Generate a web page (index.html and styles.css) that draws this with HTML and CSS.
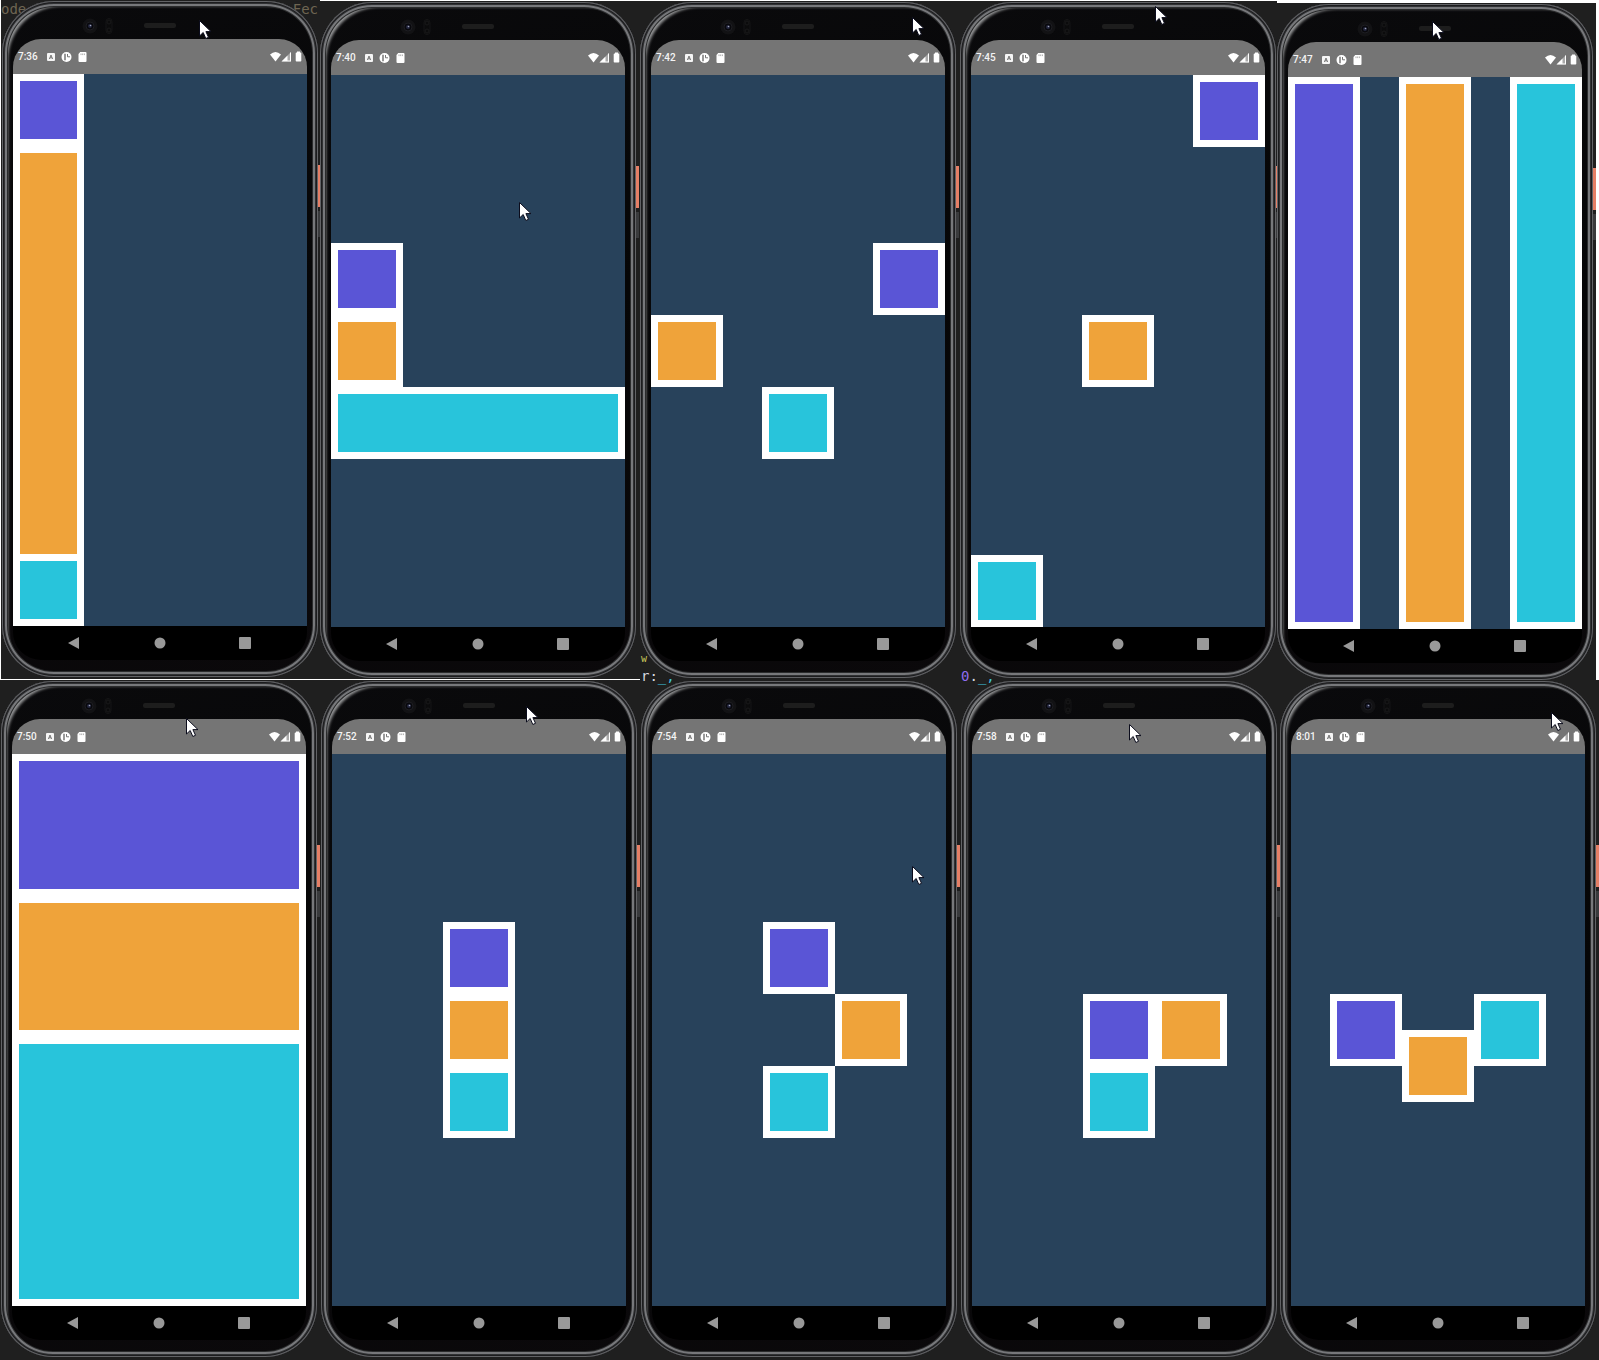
FILE: index.html
```
<!DOCTYPE html>
<html lang="en">
<head>
<meta charset="utf-8">
<title>Flexbox layouts</title>
<link rel="stylesheet" href="styles.css">
</head>
<body>
<svg class="defs" aria-hidden="true">
  <symbol id="notes" viewBox="0 0 42 12">
    <rect x="1" y="2" width="8" height="8" rx="1" fill="#f5f5f5"/>
    <path d="M3.400 8 5 4 6.600 8M4 6.800h2" fill="none" stroke="#777" stroke-width="1"/>
    <circle cx="20.500" cy="6" r="5" fill="#fff"/>
    <path d="M19 2.800v6.400" fill="none" stroke="#777" stroke-width="1.500"/>
    <path d="M21.500 3v2.800h2.500" fill="none" stroke="#777" stroke-width="1"/>
    <path d="M34.200 1h5.300q1 0 1 1v8q0 1-1 1h-6q-1 0-1-1V3z" fill="#fff"/>
    <path d="M35 2.500v1.600M36.700 2.500v1.600M38.400 2.500v1.600" stroke="#999" stroke-width=".8"/>
  </symbol>
  <symbol id="signal" viewBox="0 0 32 12">
    <path d="M0 3.500Q5.500-1.500 11 3.500L5.500 10.500z" fill="#fff"/>
    <path d="M21 1V10.500H11.500z" fill="#aaa"/>
    <path d="M17.500 4.500V10.500H11.500zM20 2l1-1V10.500H17v-1h3z" fill="#fff"/>
    <path d="M27 1.500V.5h3v1h.5q.8 0 .8.800v7.400q0 .8-.8.800h-4q-.8 0-.8-.8V2.300q0-.8.8-.8z" fill="#fff"/>
  </symbol>
  <symbol id="lens" viewBox="0 0 32 18">
    <circle cx="8" cy="9" r="7.500" fill="#121214"/>
    <circle cx="8" cy="9" r="4" fill="#08080c" stroke="#1d1d22"/>
    <circle cx="8" cy="9" r="2" fill="#23263f"/>
    <circle cx="8.500" cy="8.500" r=".8" fill="#a0a4b8"/>
    <rect x="24" y="1.500" width="6" height="15" rx="3" fill="#0b0b0c" stroke="#151516"/>
    <circle cx="27" cy="5" r="2" fill="none" stroke="#19191a"/>
    <circle cx="27" cy="13" r="2" fill="none" stroke="#19191a"/>
  </symbol>
  <symbol id="cursor" viewBox="0 0 13 19">
    <path d="M.5.500V16L4.200 12.500 6.800 18.500 9.500 17.300 6.900 11.600H12z" fill="#fff" stroke="#0b0c1c"/>
  </symbol>
</svg>

<main class="board">
  <div class="row row-top"></div>
  <div class="row row-bottom"></div>
</main>
<script src="phones.js"></script>
</body>
</html>
```
FILE: phones.js
```
const phones = [
  { time: '7:36', layout: 'grow', cursor: [197, 19], code: { left: 'ode', right: 'Fec' } },
  { time: '7:40', layout: 'stretch', cursor: [199, 200] },
  { time: '7:42', layout: 'zigzag', cursor: [272, 15] },
  { time: '7:45', layout: 'diagonal', cursor: [195, 4] },
  { time: '7:47', layout: 'columns', cursor: [155, 17] },
  { time: '7:50', layout: 'bands', cursor: [185, 37] },
  { time: '7:52', layout: 'stack', cursor: [205, 25] },
  { time: '7:54', layout: 'step', cursor: [271, 185], code: { upper: 'w', top: 'r:<i>_,</i>' } },
  { time: '7:58', layout: 'corner', cursor: [168, 43], code: { top: '<b>0</b>.<i>_,</i>' } },
  { time: '8:01', layout: 'dip', cursor: [271, 31] },
];

const icon = (name, cls, w, h) =>
  `<svg class="${cls}" width="${w}" height="${h}" aria-hidden="true"><use href="#${name}"/></svg>`;

const code = (parts = {}) =>
  Object.entries(parts).map(([place, text]) => `<code class="code code-${place}">${text}</code>`).join('');

const tile = (p) => `
  <section class="tile tile-${p.layout}">
    ${code(p.code)}
    <div class="phone">
      <div class="bezel">
        ${icon('lens', 'lens', 32, 18)}
        <span class="speaker"></span>
      </div>
      <div class="screen">
        <header class="status">
          <time>${p.time}</time>
          ${icon('notes', 'notes', 42, 12)}
          ${icon('signal', 'signal', 32, 12)}
        </header>
        <div class="app ${p.layout}">
          <div class="box blue"></div>
          <div class="box gold"></div>
          <div class="box teal"></div>
        </div>
        <nav class="nav">
          <button aria-label="Back"><svg width="12" height="12"><path d="M0 6 11 0V12z"/></svg></button>
          <button aria-label="Home"><svg width="12" height="12"><circle cx="6" cy="6" r="5.500"/></svg></button>
          <button aria-label="Recent apps"><svg width="12" height="12"><rect width="12" height="12" rx="1"/></svg></button>
        </nav>
      </div>
      <span class="power"></span>
      <span class="volume"></span>
      <span class="pointer" style="left:${p.cursor[0]}px;top:${p.cursor[1]}px">${icon('cursor', 'cursor', 13, 19)}</span>
    </div>
  </section>`;

document.querySelector('.row-top').innerHTML = phones.slice(0, 5).map(tile).join('');
document.querySelector('.row-bottom').innerHTML = phones.slice(5).map(tile).join('');
```
FILE: styles.css
```
* { box-sizing: border-box; }

body {
  margin: 0;
  background: #1f1f1f;
  font-family: Roboto, "Liberation Sans", sans-serif;
}

.defs { position: absolute; width: 0; height: 0; }

.row { display: grid; }
.row-top {
  grid-template-columns: 320fr 320fr 320fr 317fr 322fr;
}
.row-bottom {
  grid-template-columns: 321fr 320fr 320fr 319fr 319fr;
}

.tile {
  position: relative;
  min-width: 0;
  padding-top: 1px;
  background: #1f1f1f;
}
.tile-grow { padding-left: 1px; border-left: 1px solid #fff; border-bottom: 1px solid #fff; }
.tile-stretch { border-top: 1px solid #fff; border-bottom: 1px solid #fff; }
.tile-zigzag, .tile-diagonal { border-top: 1px solid #fff; }
.tile-columns { border-top: 3px solid #fff; border-right: 3px solid #fff; }
.tile-bands { padding-left: 1px; }

.code {
  position: absolute;
  color: #6e6552;
  font: 14px/16px "DejaVu Sans Mono", monospace;
}
.code-left { left: 0; top: 1px; }
.code-right { right: 2px; top: 1px; }
.code-top { left: 0; top: -12px; color: #d8d8e0; }
.code-upper { left: 0; top: -29px; color: #c9c45a; font-size: 10px; }
.code i { color: #3fc3dc; font-style: normal; }
.code b { color: #8f6cf0; font-weight: normal; }

.phone {
  position: relative;
  width: 316px;
  padding: 0 11px 17px;
  border-radius: 52px;
  background: linear-gradient(160deg, #0a0a0c, #060607 50%, #0b090b);
  box-shadow:
    inset 0 0 0 1px #626366,
    inset 0 0 0 2px #1c1c1e,
    inset 0 0 0 3px #303133,
    inset 0 0 0 5px #77787b,
    inset 0 0 0 6px #2a2b2c,
    inset 8px 7px 3px -2px #98999a;
}

.bezel {
  display: flex;
  align-items: center;
  gap: 30px;
  height: 38px;
  padding: 11px 0 0 69px;
}
.speaker { width: 32px; height: 5px; border-radius: 2px; background: #1d1d1d; }

.screen {
  overflow: hidden;
  border-radius: 28px;
  background: #000;
}

.status {
  display: flex;
  align-items: center;
  height: 35px;
  padding: 0 5px;
  background: #757575;
  color: #f4f4f4;
  font-size: 10px;
  font-weight: 500;
  line-height: 12px;
}
.status time { width: 28px; }
.signal { margin-left: auto; }

.app { display: flex; height: 552px; background: #28425b; }

.box {
  width: 72px;
  height: 72px;
  border: 7px solid #fff;
}
.blue { background: #5a55d6; }
.gold { background: #efa33a; }
.teal { background: #28c4db; }

.grow { flex-direction: column; }
.grow .box { width: 71px; }
.grow .gold { flex: 1; border-bottom: 0; }

.stretch { flex-direction: column; justify-content: center; }
.stretch .teal { width: auto; }

.zigzag { flex-direction: column; justify-content: center; }
.zigzag .blue, .diagonal .blue { align-self: flex-end; }
.zigzag .teal, .diagonal .gold { align-self: center; }

.diagonal { flex-direction: column; justify-content: space-between; }

.columns { justify-content: space-between; }
.columns .box { height: auto; }

.bands { flex-direction: column; }
.bands .box { flex: 1; width: auto; }
.bands .teal { flex: 2; }

.stack { flex-direction: column; align-items: center; justify-content: center; }

.step, .corner {
  display: grid;
  grid-template: repeat(3, 72px) / repeat(3, 72px);
  place-content: center;
}
.step .blue { grid-area: 1 / 2; }
.corner .blue { grid-area: 2 / 2; }
.step .gold, .corner .gold { grid-area: 2 / 3; }
.step .teal, .corner .teal { grid-area: 3 / 2; }

.dip { align-items: center; justify-content: center; }
.dip .gold { margin-top: 72px; }

.nav {
  display: flex;
  align-items: center;
  justify-content: space-between;
  height: 34px;
  padding: 0 52px 0 51px;
}
.nav button {
  display: flex;
  padding: 4px;
  border: 0;
  background: none;
}
.nav svg { fill: #999; }

.power, .volume { position: absolute; right: -3px; width: 3px; }
.power { top: 164px; height: 42px; background: #e57f66; }
.volume { top: 210px; height: 26px; background: #3a3b3d; }

.pointer { position: absolute; z-index: 1; line-height: 0; }
```
